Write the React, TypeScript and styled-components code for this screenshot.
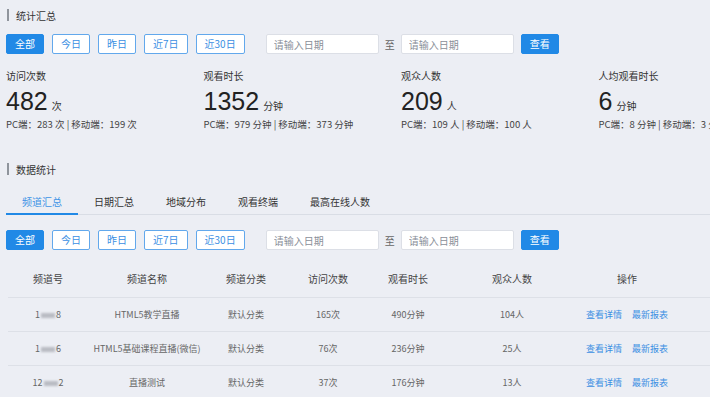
import React from 'react'
import styled, { createGlobalStyle } from 'styled-components'

const GlobalStyle = createGlobalStyle`
  html, body {
    margin: 0;
    padding: 0;
    background: #eceef4;
    overflow: hidden;
  }
  body {
    font-family: 'Noto Sans CJK SC', 'Noto Sans', sans-serif;
    color: #333;
  }
`

const Page = styled.div`
  width: 800px;
  padding: 6px 0 0 6px;
  box-sizing: border-box;
`

const SectionTitle = styled.div<{ $top: number }>`
  display: flex;
  align-items: center;
  gap: 7px;
  height: 18px;
  margin-top: ${(p) => p.$top}px;
  padding-left: 1px;
  font-size: 10px;
  color: #333;

  &::before {
    content: '';
    width: 2px;
    height: 12px;
    background: #8f949c;
  }
`

const FilterRow = styled.div<{ $top: number }>`
  display: flex;
  align-items: center;
  height: 20px;
  margin-top: ${(p) => p.$top}px;
`

const Btn = styled.button<{ $active?: boolean }>`
  height: 20px;
  padding: 0 8px;
  margin-right: 8px;
  box-sizing: border-box;
  font-family: inherit;
  font-size: 10px;
  line-height: 18px;
  border-radius: 2px;
  border: 1px solid ${(p) => (p.$active ? '#2189e6' : '#62a8ec')};
  background: ${(p) => (p.$active ? '#2189e6' : '#fff')};
  color: ${(p) => (p.$active ? '#fff' : '#3b8fe3')};
  white-space: nowrap;
  cursor: pointer;
`

const DateInput = styled.input`
  width: 113px;
  height: 20px;
  box-sizing: border-box;
  border: 1px solid #dcdfe6;
  border-radius: 2px;
  background: #fff;
  padding: 0 7px;
  font-family: inherit;
  font-size: 10px;
  outline: none;

  &::placeholder {
    color: #8a8f98;
  }
`

const DateGroup = styled.div`
  display: flex;
  align-items: center;
  margin-left: 13px;
`

const To = styled.span`
  width: 22px;
  text-align: center;
  font-size: 10px;
  color: #666;
`

const SearchBtn = styled(Btn)`
  margin-left: 7px;
`

const StatGrid = styled.div`
  display: grid;
  grid-template-columns: repeat(4, 197.5px);
  margin-top: 15px;
`

const StatCell = styled.div`
  display: flex;
  flex-direction: column;
`

const StatLabel = styled.div`
  font-size: 10px;
  line-height: 14px;
  color: #333;
`

const StatValue = styled.div`
  display: flex;
  align-items: baseline;
  height: 34px;
  font-family: 'Liberation Sans', Arial, sans-serif;
  font-size: 25px;
  line-height: 36px;
  color: #222;
`

const Unit = styled.span`
  margin-left: 4px;
  font-family: 'Noto Sans CJK SC', sans-serif;
  font-size: 10px;
  color: #333;
`

const StatSub = styled.div`
  font-size: 9.5px;
  line-height: 14px;
  color: #444;
  white-space: nowrap;
`

const Tabs = styled.div`
  display: flex;
  margin-top: 13px;
  border-bottom: 1px solid #d9dde5;
  width: 794px;
`

const Tab = styled.div<{ $active?: boolean }>`
  padding: 0 16px;
  height: 24px;
  line-height: 22px;
  box-sizing: border-box;
  font-size: 10px;
  color: ${(p) => (p.$active ? '#3d93e6' : '#333')};
  border-bottom: 2px solid ${(p) => (p.$active ? '#2189e6' : 'transparent')};
  margin-bottom: -1px;
  white-space: nowrap;
`

const Table = styled.div`
  margin-top: 9px;
  margin-left: 2px;
`

const cols = '80px 118px 80px 84px 76px 132px 98px 1fr'

const HeadRow = styled.div`
  display: grid;
  grid-template-columns: ${cols};
  height: 38px;
  align-items: center;
  border-bottom: 1px solid #dde0e7;
  font-size: 10px;
  color: #444;
  text-align: center;
  white-space: nowrap;
`

const Row = styled.div`
  display: grid;
  grid-template-columns: ${cols};
  height: 33px;
  align-items: center;
  border-bottom: 1px solid #dde0e7;
  font-size: 9px;
  color: #666;
  text-align: center;
  white-space: nowrap;
`

const Masked = styled.span`
  display: inline-block;
  width: 14px;
  height: 5px;
  margin: 0 1px;
  vertical-align: middle;
  background: #b9bcc3;
  filter: blur(1.2px);
`

const Link = styled.a`
  color: #3b8fe3;
  margin: 0 5px;
  text-decoration: none;
  cursor: pointer;
`

const filters = ['今日', '昨日', '近7日', '近30日']

const stats = [
  { label: '访问次数', value: '482', unit: '次', sub: 'PC端：283 次 | 移动端：199 次' },
  { label: '观看时长', value: '1352', unit: '分钟', sub: 'PC端：979 分钟 | 移动端：373 分钟' },
  { label: '观众人数', value: '209', unit: '人', sub: 'PC端：109 人 | 移动端：100 人' },
  { label: '人均观看时长', value: '6', unit: '分钟', sub: 'PC端：8 分钟 | 移动端：3 分钟' },
]

const tabs = ['频道汇总', '日期汇总', '地域分布', '观看终端', '最高在线人数']

const rows = [
  { a: '1', b: '8', name: 'HTML5教学直播', visits: '165次', time: '490分钟', people: '104人' },
  { a: '1', b: '6', name: 'HTML5基础课程直播(微信)', visits: '76次', time: '236分钟', people: '25人' },
  { a: '12', b: '2', name: '直播测试', visits: '37次', time: '176分钟', people: '13人' },
]

const Filters = ({ top }: { top: number }) => (
  <FilterRow $top={top}>
    <Btn $active>全部</Btn>
    {filters.map((f) => (
      <Btn key={f}>{f}</Btn>
    ))}
    <DateGroup>
      <DateInput placeholder="请输入日期" />
      <To>至</To>
      <DateInput placeholder="请输入日期" />
      <SearchBtn $active>查看</SearchBtn>
    </DateGroup>
  </FilterRow>
)

export default function App() {
  return (
    <Page>
      <GlobalStyle />
      <SectionTitle $top={0}>统计汇总</SectionTitle>
      <Filters top={10} />
      <StatGrid>
        {stats.map((s) => (
          <StatCell key={s.label}>
            <StatLabel>{s.label}</StatLabel>
            <StatValue>
              {s.value}
              <Unit>{s.unit}</Unit>
            </StatValue>
            <StatSub>{s.sub}</StatSub>
          </StatCell>
        ))}
      </StatGrid>
      <SectionTitle $top={29}>数据统计</SectionTitle>
      <Tabs>
        {tabs.map((t, i) => (
          <Tab key={t} $active={i === 0}>
            {t}
          </Tab>
        ))}
      </Tabs>
      <Filters top={15} />
      <Table>
        <HeadRow>
          <div>频道号</div>
          <div>频道名称</div>
          <div>频道分类</div>
          <div>访问次数</div>
          <div>观看时长</div>
          <div>观众人数</div>
          <div>操作</div>
          <div />
        </HeadRow>
        {rows.map((r) => (
          <Row key={r.name}>
            <div>
              {r.a}
              <Masked />
              {r.b}
            </div>
            <div>{r.name}</div>
            <div>默认分类</div>
            <div>{r.visits}</div>
            <div>{r.time}</div>
            <div>{r.people}</div>
            <div>
              <Link>查看详情</Link>
              <Link>最新报表</Link>
            </div>
            <div />
          </Row>
        ))}
      </Table>
    </Page>
  )
}
